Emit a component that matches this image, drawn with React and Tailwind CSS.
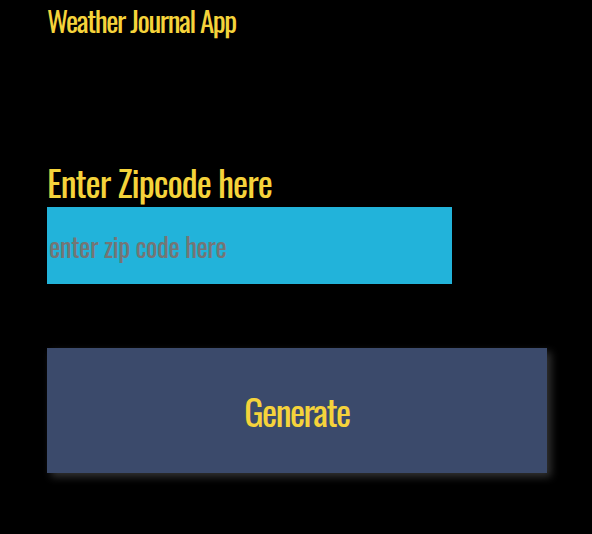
export default function App() {
  return (
    <div className="min-h-[534px] w-full bg-black pl-[47px] font-['Oswald','Liberation_Sans_Narrow','DejaVu_Sans_Condensed',sans-serif] text-[#f5d33b]">
      <div className="text-[29px] leading-[40px] tracking-[-1.4px]">Weather Journal App</div>
      <div className="mt-[120px] text-[36px] leading-[44px] tracking-[-1px]">Enter Zipcode here</div>
      <input
        type="text"
        placeholder="enter zip code here"
        className="mt-[3px] block h-[77px] w-[405px] bg-[#22b3da] pl-[2px] font-['Oswald','Liberation_Sans_Narrow','DejaVu_Sans_Condensed',sans-serif] text-[27px] tracking-[-0.5px] text-[#333] outline-none placeholder:text-[#757575]"
      />
      <button className="mt-[64px] flex h-[125px] w-[500px] items-center justify-center bg-[#3b4a6b] font-['Oswald','Liberation_Sans_Narrow','DejaVu_Sans_Condensed',sans-serif] text-[36px] tracking-[-1.5px] text-[#f5d33b] shadow-[4px_4px_8px_rgba(110,110,110,0.45)]">
        Generate
      </button>
    </div>
  );
}
